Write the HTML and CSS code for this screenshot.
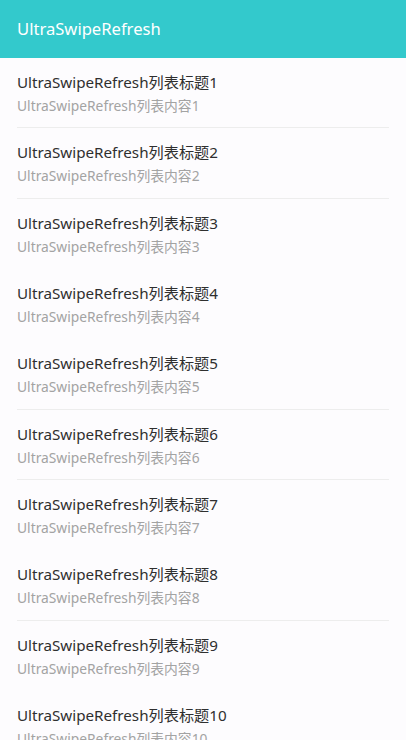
FILE: index.html
```html
<!DOCTYPE html>
<html>
<head>
<meta charset="utf-8">
<link rel="stylesheet" href="styles.css">
</head>
<body>
<header class="appbar">UltraSwipeRefresh</header>
<ul class="list">
  <li class="item divided"><div class="title">UltraSwipeRefresh列表标题1</div><div class="sub">UltraSwipeRefresh列表内容1</div></li>
  <li class="item divided"><div class="title">UltraSwipeRefresh列表标题2</div><div class="sub">UltraSwipeRefresh列表内容2</div></li>
  <li class="item"><div class="title">UltraSwipeRefresh列表标题3</div><div class="sub">UltraSwipeRefresh列表内容3</div></li>
  <li class="item"><div class="title">UltraSwipeRefresh列表标题4</div><div class="sub">UltraSwipeRefresh列表内容4</div></li>
  <li class="item divided"><div class="title">UltraSwipeRefresh列表标题5</div><div class="sub">UltraSwipeRefresh列表内容5</div></li>
  <li class="item divided"><div class="title">UltraSwipeRefresh列表标题6</div><div class="sub">UltraSwipeRefresh列表内容6</div></li>
  <li class="item"><div class="title">UltraSwipeRefresh列表标题7</div><div class="sub">UltraSwipeRefresh列表内容7</div></li>
  <li class="item divided"><div class="title">UltraSwipeRefresh列表标题8</div><div class="sub">UltraSwipeRefresh列表内容8</div></li>
  <li class="item"><div class="title">UltraSwipeRefresh列表标题9</div><div class="sub">UltraSwipeRefresh列表内容9</div></li>
  <li class="item"><div class="title">UltraSwipeRefresh列表标题10</div><div class="sub">UltraSwipeRefresh列表内容10</div></li>
</ul>
</body>
</html>
```
FILE: styles.css
```css
html, body {
  margin: 0;
  padding: 0;
  height: 740px;
  overflow: hidden;
  background: #fdfcfe;
  font-family: "Noto Sans", "Noto Sans CJK SC", sans-serif;
}
.appbar {
  height: 58px;
  line-height: 57px;
  background: #33c9cc;
  color: #ffffff;
  font-size: 16.6px;
  padding-left: 17px;
}
.list {
  list-style: none;
  margin: 0;
  padding: 0 17px;
}
.item {
  box-sizing: border-box;
  height: 70.33px;
  padding-top: 13px;
  border-bottom: 1px solid transparent;
}
.item.divided {
  border-bottom-color: #ededed;
}
.title {
  font-size: 15.2px;
  line-height: 22px;
  color: #2f2f2f;
}
.sub {
  margin-top: 2px;
  font-size: 13.8px;
  line-height: 22px;
  color: #a3a3a3;
}
```
